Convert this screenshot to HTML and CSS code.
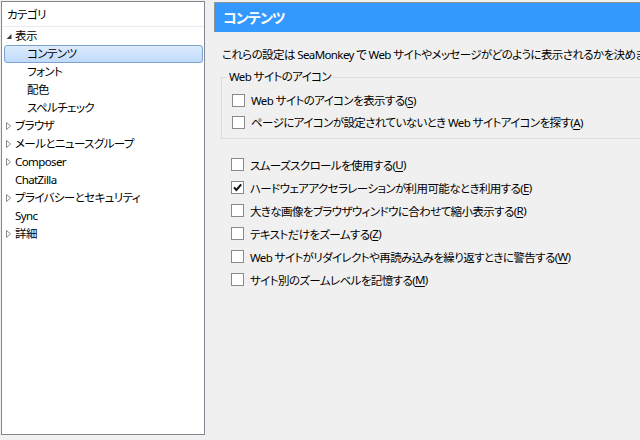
FILE: index.html
```
<!DOCTYPE html>
<html lang="ja">
<head>
<meta charset="utf-8">
<link rel="stylesheet" href="styles.css">
</head>
<body>
<div class="sidebar">
  <div class="tree-head">カテゴリ</div>
  <ul class="tree">
    <li class="row top"><svg class="twisty" width="8" height="10" viewBox="0 0 8 10"><polygon points="6.5,3 6.5,8 1.5,8" fill="#3c3c3c"/></svg>表示</li>
    <li class="row child selected">コンテンツ</li>
    <li class="row child">フォント</li>
    <li class="row child">配色</li>
    <li class="row child">スペルチェック</li>
    <li class="row top"><svg class="twisty" width="8" height="10" viewBox="0 0 8 10"><polygon points="1.5,1.5 5.5,5 1.5,8.5" fill="none" stroke="#8a8a8a"/></svg>ブラウザ</li>
    <li class="row top"><svg class="twisty" width="8" height="10" viewBox="0 0 8 10"><polygon points="1.5,1.5 5.5,5 1.5,8.5" fill="none" stroke="#8a8a8a"/></svg>メールとニュースグループ</li>
    <li class="row top"><svg class="twisty" width="8" height="10" viewBox="0 0 8 10"><polygon points="1.5,1.5 5.5,5 1.5,8.5" fill="none" stroke="#8a8a8a"/></svg>Composer</li>
    <li class="row top leaf">ChatZilla</li>
    <li class="row top"><svg class="twisty" width="8" height="10" viewBox="0 0 8 10"><polygon points="1.5,1.5 5.5,5 1.5,8.5" fill="none" stroke="#8a8a8a"/></svg>プライバシーとセキュリティ</li>
    <li class="row top leaf">Sync</li>
    <li class="row top"><svg class="twisty" width="8" height="10" viewBox="0 0 8 10"><polygon points="1.5,1.5 5.5,5 1.5,8.5" fill="none" stroke="#8a8a8a"/></svg>詳細</li>
  </ul>
</div>
<div class="main">
  <div class="page-title">コンテンツ</div>
  <p class="desc">これらの設定は SeaMonkey で Web サイトやメッセージがどのように表示されるかを決めます。</p>
  <fieldset class="group">
    <legend>Web サイトのアイコン</legend>
    <div class="check g"><span class="box"></span>Web サイトのアイコンを表示する(<u>S</u>)</div>
    <div class="check g"><span class="box"></span>ページにアイコンが設定されていないとき Web サイトアイコンを探す(<u>A</u>)</div>
  </fieldset>
  <div class="checks">
    <div class="check"><span class="box"></span>スムーズスクロールを使用する(<u>U</u>)</div>
    <div class="check"><span class="box on"><svg width="11" height="11" viewBox="0 0 11 11"><path d="M2 5.3 L4.4 8 L9.2 2.3" fill="none" stroke="#111" stroke-width="2"/></svg></span>ハードウェアアクセラレーションが利用可能なとき利用する(<u>E</u>)</div>
    <div class="check"><span class="box"></span>大きな画像をブラウザウィンドウに合わせて縮小表示する(<u>R</u>)</div>
    <div class="check"><span class="box"></span>テキストだけをズームする(<u>Z</u>)</div>
    <div class="check"><span class="box"></span>Web サイトがリダイレクトや再読み込みを繰り返すときに警告する(<u>W</u>)</div>
    <div class="check"><span class="box"></span>サイト別のズームレベルを記憶する(<u>M</u>)</div>
  </div>
</div>
</body>
</html>
```
FILE: styles.css
```
html, body {
  margin: 0;
  padding: 0;
  width: 640px;
  height: 440px;
  overflow: hidden;
  background: #f0f0f0;
}
body {
  display: flex;
  align-items: flex-start;
  font-family: "Noto Sans", "Noto Sans CJK JP", sans-serif;
  font-feature-settings: "palt";
  font-size: 11.5px;
  letter-spacing: -0.6px;
  color: #000;
}
.sidebar {
  margin: 1px 0 0 1px;
  width: 202px;
  height: 432px;
  border: 1px solid #828790;
  background: #fff;
  flex: none;
}
.tree-head {
  height: 24px;
  line-height: 26px;
  padding-left: 5px;
  border-bottom: 1px solid #e8ecf0;
}
.tree {
  list-style: none;
  margin: 0;
  padding: 0;
}
.row {
  height: 18px;
  line-height: 18px;
  display: flex;
  align-items: center;
  white-space: nowrap;
}
.row.top { padding-left: 3px; }
.row.leaf { padding-left: 13px; }
.twisty { flex: none; margin-right: 2px; }
.row.child { padding-left: 25px; }
.row.selected {
  margin: 0 1px 0 2px;
  padding-left: 22px;
  height: 16px;
  border: 1px solid #7da2ce;
  border-radius: 3px;
  background: linear-gradient(#dcebfc, #c1dbfc);
}
.main {
  margin-left: 9px;
  width: 520px;
  flex: none;
  white-space: nowrap;
}
.page-title {
  margin-top: 2px;
  height: 29px;
  border-top: 1px solid #8f9498;
  border-left: 1px solid #8f9498;
  background: #3399ff;
  color: #fff;
  font-weight: bold;
  font-size: 14px;
  letter-spacing: -0.8px;
  line-height: 30px;
  padding-left: 8px;
}
.desc {
  margin: 14px 0 0 8px;
  line-height: 18px;
}
.group {
  margin: 4px 0 0 7px;
  padding: 0 0 5px 5px;
  border: 1px solid #dcdcdc;
  border-right: none;
  min-width: 0;
}
.group legend {
  padding: 0 2px;
  line-height: 18px;
}
.check {
  display: flex;
  align-items: center;
  height: 23px;
  padding-left: 4px;
}
.check.g {
  height: 22px;
  padding-left: 5px;
}
.group .check.g:first-of-type { margin-top: 3px; }
.checks {
  margin-top: 14px;
  padding-left: 13px;
}
.checks .check { padding-left: 4px; }
.box {
  width: 11px;
  height: 11px;
  border: 1px solid #8a8a8a;
  background: #fff;
  margin-right: 6px;
  flex: none;
  display: flex;
  align-items: center;
  justify-content: center;
}
u { text-decoration: underline; text-underline-offset: 2px; }
```
